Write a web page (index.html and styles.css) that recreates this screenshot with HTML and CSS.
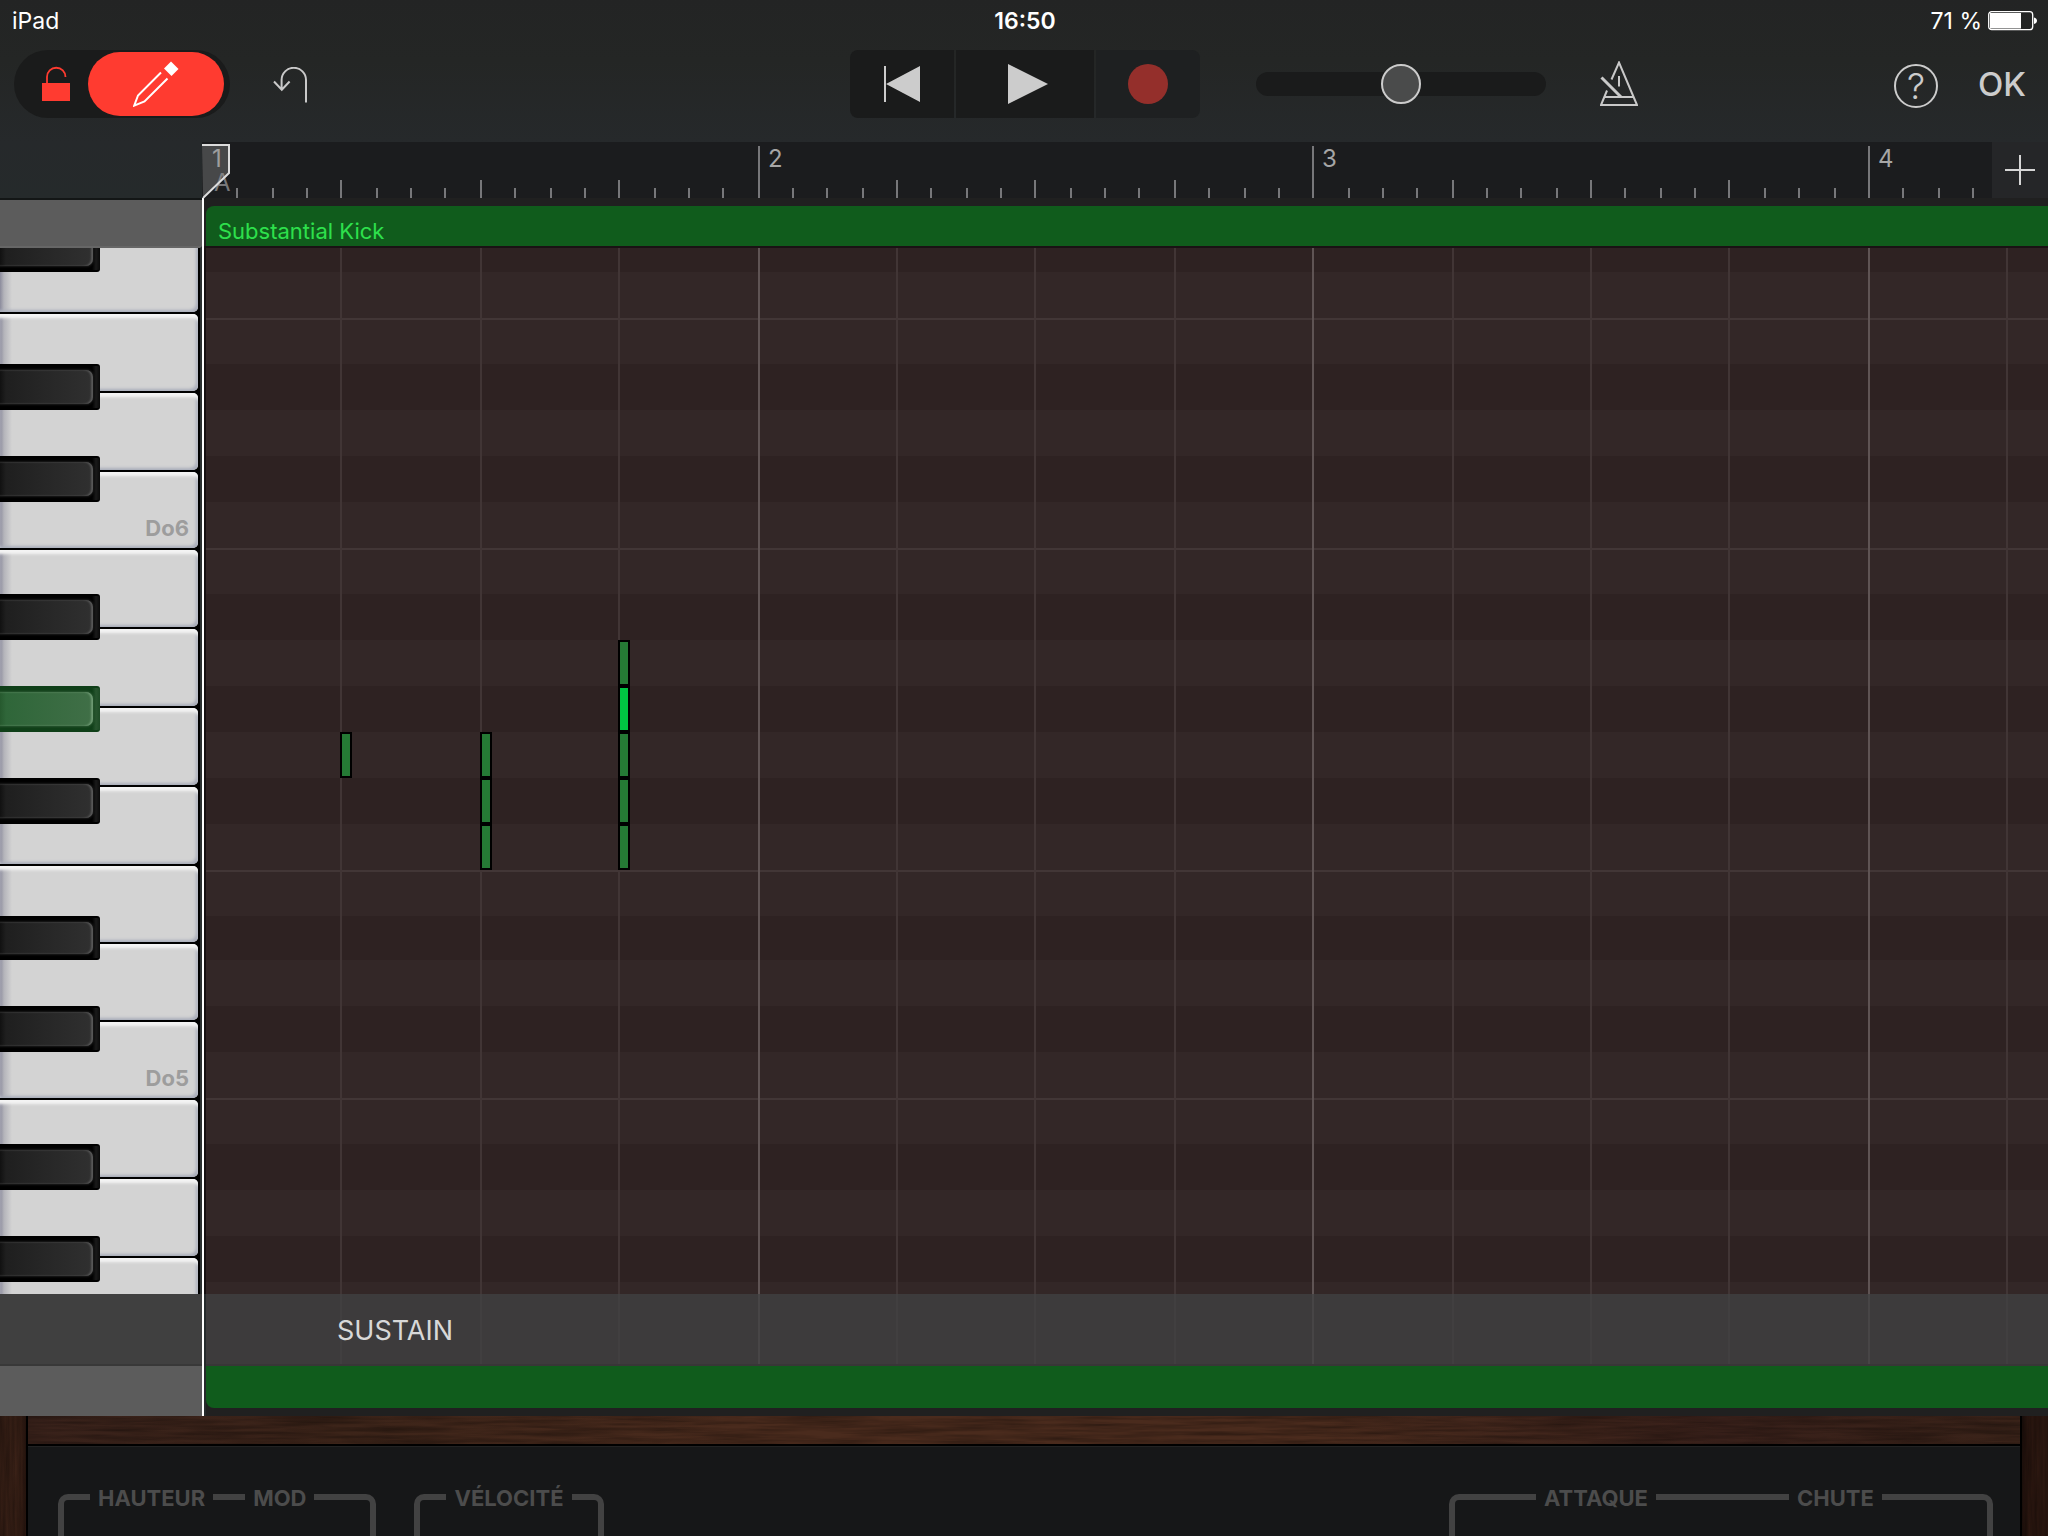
FILE: index.html
```html
<!DOCTYPE html>
<html lang="fr">
<head>
<meta charset="utf-8">
<meta name="viewport" content="width=device-width, initial-scale=1">
<title>Substantial Kick</title>
<link rel="stylesheet" href="styles.css">
</head>
<body>
<header class="top">
  <div class="status">
    <span>iPad</span>
    <time class="clock">16:50</time>
    <span class="battery">71 %
      <svg width="50" height="20" viewBox="0 0 50 20" aria-hidden="true"><rect x="0.7" y="0.7" width="44" height="18" rx="3" fill="none" stroke="#fff" stroke-width="1.3"/><rect x="2" y="2" width="31" height="15.5" fill="#fff"/><path d="M46 6.5c4 1 4 5.500 0 6.500z" fill="#fff"/></svg>
    </span>
  </div>
  <nav class="toolbar">
    <div class="tools">
      <div class="mode">
        <button class="lock" aria-label="Verrouiller"><svg width="28" height="36" viewBox="0 0 28 36"><path d="M5 18V11a9.200 9.200 0 0 1 18.500 0" fill="none" stroke="#ff3b30" stroke-width="1.800"/><path d="M0 17h28v18H0z" fill="#ff3b30"/></svg></button>
        <button class="pencil" aria-label="Modifier"><svg width="46" height="46" viewBox="0 0 46 46"><path d="M28 11.500 5 34.500 1.200 44.600 11.500 40.500 34.500 17.500" fill="none" stroke="#fff" stroke-width="2"/><path d="M38 0.500 45.500 8 38.500 15 31 7.500z" fill="#fff"/></svg></button>
      </div>
      <button class="undo" aria-label="Annuler"><svg width="36" height="36" viewBox="0 0 36 36"><path d="M33 35.500V13a12.200 12.200 0 0 0-24.400 0v10M1 14.500l7.800 8.300 7.800-8.300" fill="none" stroke="#c9c9c9" stroke-width="2"/></svg></button>
    </div>
    <div class="transport">
      <button class="side" aria-label="Retour au début"><svg width="36" height="36" viewBox="0 0 36 36"><path d="M0 0h2v36H0zM2 18 36 0v36z" fill="#ccc"/></svg></button>
      <button class="mid" aria-label="Lecture"><svg width="40" height="40" viewBox="0 0 40 40"><path d="M0 0 40 20 0 40z" fill="#ccc"/></svg></button>
      <button class="side rec" aria-label="Enregistrer"><svg width="40" height="40" viewBox="0 0 40 40"><circle cx="20" cy="20" r="20" fill="#942f2b"/></svg></button>
    </div>
    <div class="controls">
      <input class="volume" type="range" min="0" max="100" value="50" aria-label="Volume principal">
      <button aria-label="Métronome"><svg width="38" height="46" viewBox="0 0 38 46"><path d="M11.500 18.500 19 1.500 37 44H1l6-14.500M5 36h29M19 15v10.500" fill="none" stroke="#c9c9c9" stroke-width="2"/><path d="M1.500 16.500 21 36" stroke="#c9c9c9" stroke-width="3"/></svg></button>
      <button class="help" aria-label="Aide">?</button>
      <button class="ok">OK</button>
    </div>
  </nav>
</header>

<main class="editor">
  <div class="corner"></div>
  <div class="ruler" id="ruler">
    <button class="add" aria-label="Ajouter une section"><svg width="30" height="30" viewBox="0 0 30 30"><path d="M0 15h30M15 0v30" stroke="#d6d6d6" stroke-width="2"/></svg></button>
  </div>
  <div class="gutter"></div>
  <div class="region"><h1 class="region-name">Substantial Kick</h1></div>
  <div class="keyboard">
    <div class="whites" id="whites"></div>
    <div class="blacks" id="blacks"></div>
  </div>
  <div class="roll">
    <div class="rows" id="rows"></div>
    <div class="beats"></div>
    <div id="notes"></div>
  </div>
  <div class="sustain-gutter"></div>
  <div class="sustain"><div class="beats"></div><span class="sustain-name">SUSTAIN</span></div>
  <div class="gutter-end"></div>
  <div class="region-end"></div>
  <div class="playhead">
    <svg class="marker" width="28" height="56" viewBox="0 0 28 56"><path d="M0 1h27v28L1 53.500" fill="#909090" fill-opacity=".38" stroke="none"/><path d="M0 1h27v28L1 54" fill="none" stroke="#dcdcdc" stroke-width="2"/></svg>
  </div>
</main>

<footer class="synth">
  <svg width="0" height="0" class="defs" aria-hidden="true">
    <filter id="grain-x" x="0" y="0" width="100%" height="100%"><feTurbulence type="fractalNoise" baseFrequency=".012 .25" numOctaves="4" seed="4"/><feColorMatrix values="0 0 0 0 0  0 0 0 0 0  0 0 0 0 0  1 0 0 0 -.3"/></filter>
    <filter id="grain-y" x="0" y="0" width="100%" height="100%"><feTurbulence type="fractalNoise" baseFrequency=".25 .012" numOctaves="4" seed="7"/><feColorMatrix values="0 0 0 0 0  0 0 0 0 0  0 0 0 0 0  1 0 0 0 -.3"/></filter>
  </svg>
  <div class="post"><svg class="grain" width="100%" height="100%"><rect width="100%" height="100%" filter="url(#grain-y)"/></svg></div>
  <div class="body">
    <div class="beam"><svg class="grain" width="100%" height="100%"><rect width="100%" height="100%" filter="url(#grain-x)"/></svg></div>
    <div class="panel">
      <section class="group wheels"><i class="start"></i><h2>HAUTEUR</h2><i class="link"></i><h2>MOD</h2><i class="end"></i></section>
      <section class="group velocity"><i class="start"></i><h2>VÉLOCITÉ</h2><i class="end"></i></section>
      <section class="group envelope"><i class="start"></i><h2>ATTAQUE</h2><i class="link"></i><h2>CHUTE</h2><i class="end"></i></section>
    </div>
  </div>
  <div class="post right"><svg class="grain" width="100%" height="100%"><rect width="100%" height="100%" filter="url(#grain-y)"/></svg></div>
</footer>
<script src="app.js"></script>
</body>
</html>
```
FILE: styles.css
```css
* { box-sizing: border-box; }
body {
  margin: 0;
  height: 100vh;
  display: flex;
  flex-direction: column;
  overflow: hidden;
  background: linear-gradient(#232424 0, #242625 60px, #26292b 142px, #252a2b 198px) #202020;
  font-family: Inter, "Liberation Sans", sans-serif;
  color: #fff;
}
button {
  margin: 0;
  padding: 0;
  border: 0;
  background: none;
  color: #ccc;
  font: inherit;
  display: flex;
  align-items: center;
  justify-content: center;
}
svg { display: block; }
h1, h2 { margin: 0; }

/* Status bar and toolbar */
.top { height: 142px; flex: none; }
.status {
  display: grid;
  grid-template-columns: 1fr auto 1fr;
  height: 50px;
  padding: 0 10px 8px 12px;
  align-items: center;
  font-size: 23px;
}
.clock { font-weight: 600; }
.battery { display: flex; justify-content: flex-end; align-items: center; gap: 6px; }
.toolbar {
  display: grid;
  grid-template-columns: 1fr auto 1fr;
  padding: 0 12px 0 14px;
  height: 68px;
}
.tools { display: flex; gap: 43px; align-items: center; }
.undo { margin-top: 2px; }
.mode {
  display: flex;
  align-items: center;
  width: 216px;
  height: 68px;
  padding-right: 6px;
  border-radius: 34px;
  background: #1a1b1b;
}
.lock { flex: 1; padding-left: 10px; }
.pencil { width: 136px; height: 64px; border-radius: 32px; background: #ff3b30; }
.transport { display: flex; gap: 2px; border-radius: 8px; overflow: hidden; }
.transport button { width: 104px; background: #1a1b1b; }
.transport .mid { width: 138px; padding-left: 6px; }
.transport .rec { background: #1e2021; }
.controls { display: flex; align-items: center; padding-left: 56px; padding-right: 10px; }
.volume {
  appearance: none;
  width: 290px;
  height: 24px;
  margin: 0 54px 0 0;
  border-radius: 12px;
  background: #1a1b1b;
}
.volume::-webkit-slider-thumb {
  appearance: none;
  width: 40px;
  height: 40px;
  border: 2px solid #ccc;
  border-radius: 50%;
  background: #4a4b4b;
}
.help {
  width: 44px;
  height: 44px;
  margin: 4px 40px 0 auto;
  border: 2px solid #ccc;
  border-radius: 50%;
  font-size: 36px;
  font-weight: 300;
}
.ok { font-size: 33px; font-weight: 500; }

/* Editor */
.editor {
  position: relative;
  flex: 1;
  min-height: 0;
  display: grid;
  grid-template-columns: 202px 1fr;
  grid-template-rows: 56px 48px 1fr 72px 50px;
}
.ruler { position: relative; background: #1b1c1e; overflow: hidden; }
.tick { position: absolute; bottom: 0; width: 2px; height: 10px; background: #77777a; }
.tick.beat { height: 18px; }
.tick.bar { height: 52px; }
.bar-number, .section-name { position: absolute; top: 5px; font-size: 24px; line-height: 24px; color: #a6a6a6; }
.section-name { top: 31px; left: 12px; line-height: 20px; color: #77777a; }
.add { position: absolute; right: 0; top: 0; width: 56px; height: 56px; background: #252628; }
.gutter { border-top: 2px solid #131616; background: #5c5c5c; }
.region { background: #202020; padding: 8px 0 0 4px; display: flex; }
.region-name {
  flex: 1;
  padding: 10px 12px 0;
  border-radius: 8px 0 0 0;
  background: #105c1c;
  color: #2ee04c;
  font-size: 22px;
  line-height: 30px;
  font-weight: 400;
}

.keyboard {
  position: relative;
  overflow: hidden;
  background: #000;
  border-right: 2px solid #2b3030;
  border-top: 2px solid #666;
}
.whites { width: 198px; }
.white {
  width: 198px;
  height: 77px;
  margin-bottom: 2px;
  padding: 0 9px 8px 0;
  border-radius: 0 5px 5px 0;
  background: linear-gradient(90deg, #8b8b9c 0, #b4b4ba 4px, #d3d3d3 12px);
  box-shadow: inset 0 5px 3px -1px #f4f4f4, inset -3px -3px 3px -1px #a9adba;
  align-items: flex-end;
  justify-content: flex-end;
  color: #9d9d9d;
  font-size: 22px;
  line-height: 24px;
  font-weight: 700;
}
.white.short { height: 76px; }
.white.cut { height: 64px; border-top-right-radius: 0; box-shadow: inset -3px -3px 3px -1px #a9adba; }
.blacks { position: absolute; top: -22px; left: 0; }
.slot { height: 46px; }
.slot.tight { height: 44px; }
.black {
  width: 100px;
  height: 100%;
  padding: 4px 7px 4px 0;
  border-radius: 0 3px 3px 0;
  background: linear-gradient(90deg, #000 92px, #1a1a1a 96px, #0a0a0a);
  border: solid #000;
  border-width: 2px 0;
}
.black::after {
  content: "";
  flex: 1;
  align-self: stretch;
  border-radius: 0 7px 7px 0;
  background: linear-gradient(90deg, #111 0, #1f1f1f 6px, #303030);
  box-shadow: inset -2px 0 2px #5a5a5a, 0 0 2px 1px #1a1a1a;
}
.black.on { background: linear-gradient(90deg, #0f3f18 92px, #28552f 96px, #1d4a25); border-color: #0f3f18; }
.black.on::after {
  background: linear-gradient(90deg, #26592e 0, #2f6639 6px, #406f47);
  box-shadow: inset -2px 0 2px #6f9a74, 0 0 2px 1px #28552f;
}

.roll { position: relative; overflow: hidden; border-left: 2px solid #161011; margin-left: 2px; }
.roll::after { content: ""; position: absolute; inset: 0 0 auto; height: 2px; background: #1a1214; }
.rows { margin-top: -20px; }
.row { height: 46px; background: #332727; }
.row.dark { background: #2e2222; }
.row.tight { height: 44px; }
.row.split { border-top: 2px solid #423636; }
.beats { position: absolute; inset: 0; }
.line { position: absolute; top: 0; bottom: 0; width: 2px; background: #413535; }
.line.bar { background: #5f5454; }
.note {
  position: absolute;
  width: 12px;
  height: 46px;
  border: 2px solid #000;
  background: #257a35;
}
.note.loud { background: #00c442; }

.sustain-gutter { background: #404040; border-bottom: 2px solid #383838; }
.sustain {
  position: relative;
  display: flex;
  align-items: center;
  margin-left: 4px;
  padding: 2px 0 0 131px;
  border-bottom: 2px solid #383637;
  background: #3d3b3c;
}
.sustain .line { background: #413f40; }
.sustain .line.bar { background: #474546; }
.sustain-name { position: relative; font-size: 27px; color: #d8d8d8; }
.gutter-end { background: #5c5c5c; }
.region-end { margin-left: 4px; border-bottom: 8px solid #202020; background: #202020; display: flex; }
.region-end::before { content: ""; flex: 1; border-radius: 0 0 0 8px; background: #105c1c; }
.playhead { position: absolute; left: 202px; top: 56px; bottom: 0; width: 2px; background: #fff; }
.marker { position: absolute; left: 0; top: -54px; }

/* Instrument face under the editor */
.synth { flex: none; height: 120px; display: flex; background: #161718; }
.defs { position: absolute; }
.grain { opacity: .6; }
.post { width: 28px; border-right: 2px solid #000; background: linear-gradient(90deg, #331d14, #3a2117 60%, #2a1710); }
.post.right { border: solid #000; border-width: 0 0 0 2px; background: linear-gradient(90deg, #1e100c, #2c1710 30%, #2a1710); }
.body { flex: 1; display: flex; flex-direction: column; }
.beam {
  height: 30px;
  border-bottom: 2px solid #000;
  background: linear-gradient(90deg, #38211a, #3c2419 16%, #4a2b1d 35%, #4a2b1d 65%, #38201a 85%, #3a2319);
}
.panel { flex: 1; display: flex; gap: 38px; padding: 36px 27px 0 30px; border-top: 1px solid #222; }
.group { display: flex; align-items: flex-start; height: 54px; padding-top: 11px; }
.group h2 { margin: -8px 8px 0; color: #4c4c4c; font-size: 22px; line-height: 24px; font-weight: 700; }
.group i { flex: 1; border-top: 6px solid #424242; }
.group .start { height: 60px; border-left: 6px solid #424242; border-top-left-radius: 10px; }
.group .end { height: 60px; border-right: 6px solid #424242; border-top-right-radius: 10px; }
.wheels { width: 318px; }
.wheels .start, .wheels .link { flex: none; width: 32px; }
.velocity { width: 190px; }
.envelope { width: 544px; margin-left: auto; }
.envelope .start { flex: none; width: 87px; }
.envelope .link { flex: none; width: 133px; }
```
FILE: app.js
```js
// Timeline scale: one bar is 16 steps; lines are snapped to the 2px device grid.
const STEP = 34.703;
const snap = step => Math.round(step * STEP / 2) * 2;
const el = (cls, tag = "div", text = "") => {
  const node = document.createElement(tag);
  node.className = cls;
  node.textContent = text;
  return node;
};

// Semitone rows from the top of the view down: "b" is a black key, "w" a white one.
const ROWS = "bwwbwbwwbwbwbwwbwbwwbwbw";
const TIGHT = 15;
const PRESSED = 10;
const rows = document.getElementById("rows");
const blacks = document.getElementById("blacks");
const tops = [];
let y = -20;
[...ROWS].forEach((kind, i) => {
  tops.push(y);
  y += i === TIGHT ? 44 : 46;
  const tight = i === TIGHT ? " tight" : "";
  const split = kind === "w" && ROWS[i - 1] === "w" ? " split" : "";
  rows.append(el("row" + (kind === "b" ? " dark" : "") + split + tight));
  const slot = el("slot" + tight);
  if (kind === "b") slot.append(el("black" + (i === PRESSED ? " on" : ""), "button"));
  blacks.append(slot);
});

const whites = document.getElementById("whites");
["cut", "", "", "short", "", "", "", "", "short", "short", "short", "", "", ""].forEach((size, i) => {
  whites.append(el("white " + size, "button", { 3: "Do6", 10: "Do5" }[i] || ""));
});

const ruler = document.getElementById("ruler");
const add = ruler.querySelector(".add");
const put = (parent, node, x, before = null) => {
  node.style.left = x + "px";
  parent.insertBefore(node, before);
};
for (let s = 0; s * STEP < ruler.clientWidth; s++) {
  const kind = s % 16 === 0 ? " bar" : s % 4 === 0 ? " beat" : "";
  if (s > 0) put(ruler, el("tick" + kind), snap(s), add);
  if (s % 16 === 0) put(ruler, el("bar-number", "span", String(s / 16 + 1)), snap(s) + 10, add);
  if (s > 0 && s % 4 === 0) {
    document.querySelectorAll(".beats").forEach(b => put(b, el("line" + kind), snap(s) - 4));
  }
}
ruler.insertBefore(el("section-name", "span", "A"), add);

// [step, row, loud]
const notes = document.getElementById("notes");
[[4, 11], [8, 11], [8, 12], [8, 13], [12, 9], [12, 10, true], [12, 11], [12, 12], [12, 13]].forEach(([s, r, loud]) => {
  const note = el("note" + (loud ? " loud" : ""));
  note.style.top = tops[r] + "px";
  put(notes, note, snap(s) - 4);
});
```
